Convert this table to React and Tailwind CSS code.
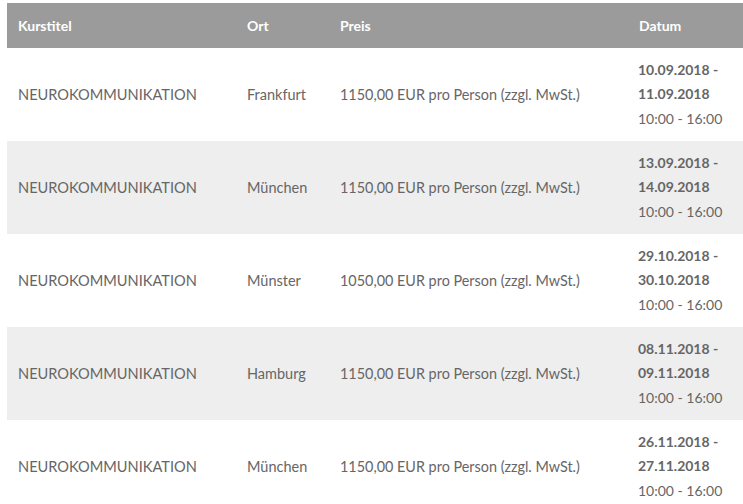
import React from "react";

const rows = [
  { ort: "Frankfurt", preis: "1150,00 EUR pro Person (zzgl. MwSt.)", from: "10.09.2018 -", to: "11.09.2018" },
  { ort: "München", preis: "1150,00 EUR pro Person (zzgl. MwSt.)", from: "13.09.2018 -", to: "14.09.2018" },
  { ort: "Münster", preis: "1050,00 EUR pro Person (zzgl. MwSt.)", from: "29.10.2018 -", to: "30.10.2018" },
  { ort: "Hamburg", preis: "1150,00 EUR pro Person (zzgl. MwSt.)", from: "08.11.2018 -", to: "09.11.2018" },
  { ort: "München", preis: "1150,00 EUR pro Person (zzgl. MwSt.)", from: "26.11.2018 -", to: "27.11.2018" },
];

export default function App() {
  return (
    <div className="w-[743px] h-[504px] overflow-hidden bg-white pt-[3px] pl-[7px]" style={{ fontFamily: "Lato, 'Open Sans', sans-serif" }}>
      <div className="w-[760px] text-[14px] text-[#666666]">
        <div className="grid grid-cols-[229px_93px_299px_1fr] h-[45px] items-center bg-[#9b9b9b] text-white font-bold">
          <div className="pl-[11px]">Kurstitel</div>
          <div className="pl-[11px]">Ort</div>
          <div className="pl-[11px]">Preis</div>
          <div className="pl-[11px]">Datum</div>
        </div>
        {rows.map((r, i) => (
          <div
            key={i}
            className={`grid grid-cols-[229px_93px_299px_1fr] items-center h-[93px] ${i % 2 === 1 ? "bg-[#eeeeee]" : "bg-white"}`}
          >
            <div className="pl-[11px] text-[14.6px]">NEUROKOMMUNIKATION</div>
            <div className="pl-[11px] text-[14.5px]">{r.ort}</div>
            <div className="pl-[11px] text-[14.4px]">{r.preis}</div>
            <div className="pl-[10px] leading-[24.5px]">
              <div className="font-bold">{r.from}</div>
              <div className="font-bold">{r.to}</div>
              <div>10:00 - 16:00</div>
            </div>
          </div>
        ))}
      </div>
    </div>
  );
}
